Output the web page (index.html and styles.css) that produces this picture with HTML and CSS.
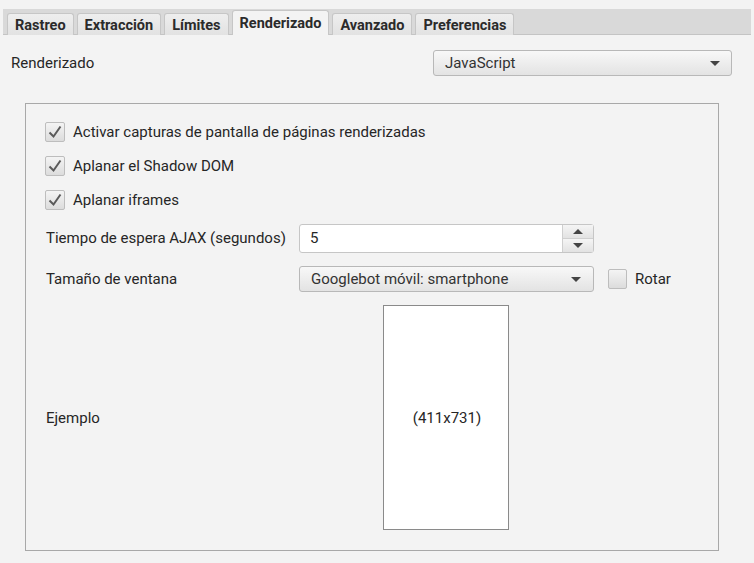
FILE: index.html
```html
<!DOCTYPE html>
<html lang="es">
<head>
<meta charset="utf-8">
<title>Renderizado</title>
<link rel="stylesheet" href="styles.css">
</head>
<body>
<div class="tabstrip">
  <div class="tab">Rastreo</div>
  <div class="tab">Extracción</div>
  <div class="tab">Límites</div>
  <div class="tab active">Renderizado</div>
  <div class="tab">Avanzado</div>
  <div class="tab">Preferencias</div>
</div>

<div class="toprow">
  <span class="label">Renderizado</span>
  <div class="select wide"><span>JavaScript</span><i class="arrow"></i></div>
</div>

<div class="group">
  <div class="checkrow"><span class="cb"><svg viewBox="0 0 20 20" width="20" height="20"><path d="M4.5 10.5 L8.5 14.5 L15.5 4.5" fill="none" stroke="#5a5a5a" stroke-width="2"/></svg></span><span>Activar capturas de pantalla de páginas renderizadas</span></div>
  <div class="checkrow"><span class="cb"><svg viewBox="0 0 20 20" width="20" height="20"><path d="M4.5 10.5 L8.5 14.5 L15.5 4.5" fill="none" stroke="#5a5a5a" stroke-width="2"/></svg></span><span>Aplanar el Shadow DOM</span></div>
  <div class="checkrow"><span class="cb"><svg viewBox="0 0 20 20" width="20" height="20"><path d="M4.5 10.5 L8.5 14.5 L15.5 4.5" fill="none" stroke="#5a5a5a" stroke-width="2"/></svg></span><span>Aplanar iframes</span></div>

  <div class="formrow ajax">
    <span class="flabel">Tiempo de espera AJAX (segundos)</span>
    <div class="spin">
      <span class="value">5</span>
      <div class="spinbtns">
        <div class="sbtn"><i class="up"></i></div>
        <div class="sbtn"><i class="down"></i></div>
      </div>
    </div>
  </div>

  <div class="formrow size">
    <span class="flabel">Tamaño de ventana</span>
    <div class="select field"><span>Googlebot móvil: smartphone</span><i class="arrow"></i></div>
    <span class="cb empty"></span>
    <span class="rot">Rotar</span>
  </div>

  <div class="formrow example">
    <span class="flabel">Ejemplo</span>
    <div class="previewarea">
      <div class="preview">(411x731)</div>
    </div>
  </div>
</div>
</body>
</html>
```

FILE: styles.css
```css
html, body {
  margin: 0;
  padding: 0;
}
body {
  width: 754px;
  height: 563px;
  background: #f3f3f3;
  font-family: Roboto, "Liberation Sans", sans-serif;
  font-size: 15px;
  color: #262626;
  overflow: hidden;
}

.tabstrip {
  margin: 9px 3px 0 3px;
  height: 26px;
  background: #d9d9d9;
  border-bottom: 1px solid #c4c4c4;
  display: flex;
  align-items: flex-end;
  gap: 3px;
  padding-left: 4px;
  box-sizing: border-box;
}
.tab {
  height: 22px;
  box-sizing: border-box;
  padding: 1px 7px 0 7px;
  display: flex;
  align-items: center;
  font-size: 14.5px;
  font-weight: bold;
  color: #2b2b2b;
  background: linear-gradient(#eeeeee, #e2e2e2);
  border: 1px solid #c6c6c6;
  border-bottom: none;
  border-radius: 3px 3px 0 0;
  margin-bottom: -1px;
}
.tab.active {
  height: 25px;
  background: #f3f3f3;
  padding-bottom: 1px;
}

.toprow {
  display: flex;
  align-items: center;
  justify-content: space-between;
  margin: 15px 22px 0 11px;
  height: 26px;
}

.select {
  box-sizing: border-box;
  height: 26px;
  border: 1px solid #b8b8b8;
  border-radius: 3px;
  background: linear-gradient(#f8f8f8, #e3e3e3);
  display: flex;
  align-items: center;
  justify-content: space-between;
  padding: 0 11px 0 11px;
  color: #333;
}
.select.wide {
  width: 299px;
}
.arrow {
  width: 0;
  height: 0;
  border-left: 5px solid transparent;
  border-right: 5px solid transparent;
  border-top: 5px solid #444;
}

.group {
  margin: 27px 35px 0 25px;
  height: 448px;
  box-sizing: border-box;
  border: 1px solid #a8a8a8;
  padding: 11px 0 0 19px;
  display: flex;
  flex-direction: column;
}

.checkrow {
  height: 34px;
  display: flex;
  align-items: center;
  gap: 8px;
}
.cb {
  width: 20px;
  height: 20px;
  box-sizing: border-box;
  border: 1px solid #bdbdbd;
  border-radius: 2px;
  background: linear-gradient(#f4f4f4, #dcdcdc);
  display: inline-flex;
  align-items: center;
  justify-content: center;
  flex: none;
}
.cb svg {
  display: block;
  margin: -1px;
}

.formrow {
  display: flex;
  align-items: center;
}
.flabel {
  width: 254px;
  flex: none;
  padding-left: 1px;
  box-sizing: border-box;
}
.ajax {
  margin-top: 5px;
  height: 32px;
}
.spin {
  width: 295px;
  height: 29px;
  box-sizing: border-box;
  border: 1px solid #c6c6c6;
  border-radius: 3px;
  background: #fff;
  display: flex;
  justify-content: space-between;
}
.spin .value {
  padding-left: 10px;
  align-self: center;
}
.spinbtns {
  width: 30px;
  display: flex;
  flex-direction: column;
  border-left: 1px solid #cfcfcf;
}
.sbtn {
  flex: 1;
  background: linear-gradient(#f5f5f5, #e2e2e2);
  display: flex;
  align-items: center;
  justify-content: center;
}
.sbtn + .sbtn {
  border-top: 1px solid #cfcfcf;
}
.up {
  width: 0; height: 0;
  border-left: 5px solid transparent;
  border-right: 5px solid transparent;
  border-bottom: 5px solid #444;
}
.down {
  width: 0; height: 0;
  border-left: 5px solid transparent;
  border-right: 5px solid transparent;
  border-top: 5px solid #444;
}

.size {
  margin-top: 9px;
  height: 32px;
}
.select.field {
  width: 295px;
  padding-right: 12px;
}
.size .cb {
  margin-left: 14px;
  width: 19px;
  height: 20px;
}
.rot {
  margin-left: 8px;
}

.example {
  margin-top: 10px;
}
.previewarea {
  width: 295px;
  display: flex;
  justify-content: center;
}
.preview {
  width: 126px;
  height: 225px;
  box-sizing: border-box;
  border: 1px solid #8a8a8a;
  background: #fff;
  display: flex;
  align-items: center;
  justify-content: center;
  margin-left: -2px;
  padding-left: 3px;
}
```
